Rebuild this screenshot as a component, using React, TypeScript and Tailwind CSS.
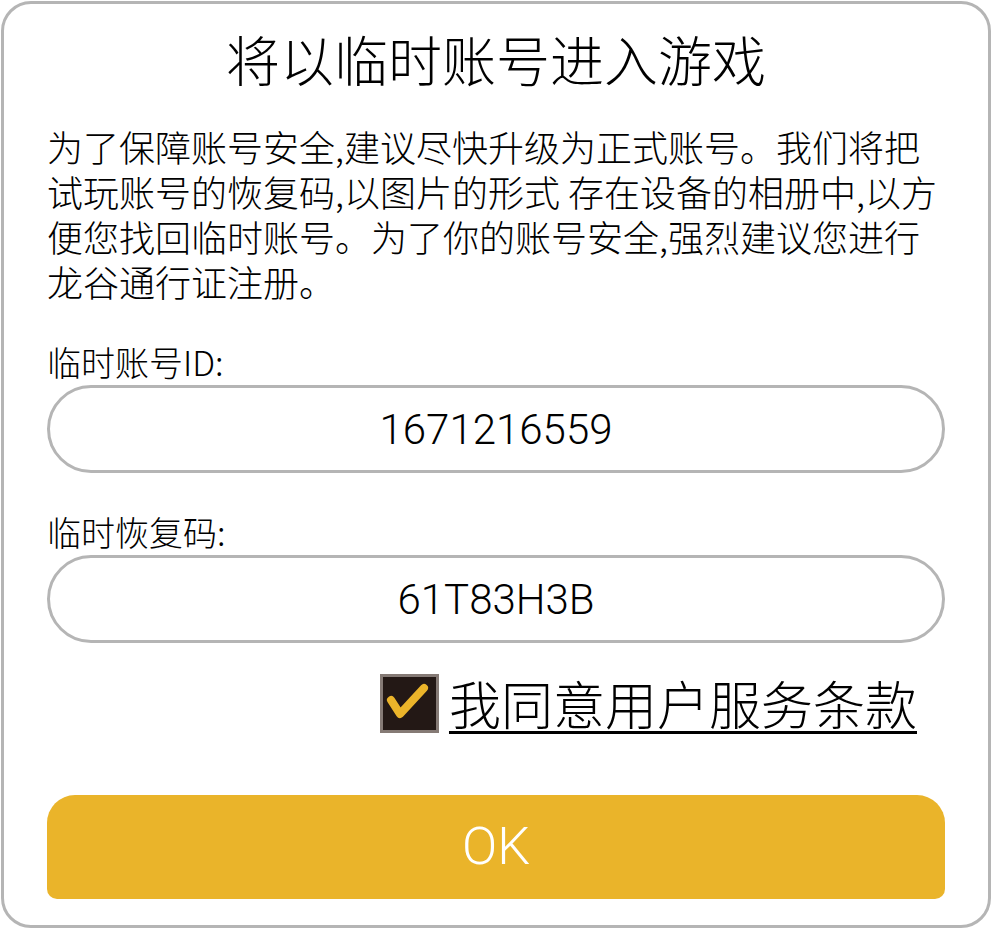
import React, { useState } from "react";

const font = { fontFamily: '"Noto Sans CJK SC", "Noto Sans", sans-serif' };
const latin = { fontFamily: 'Roboto, "Noto Sans CJK SC", sans-serif' };

const notice = [
  "为了保障账号安全,建议尽快升级为正式账号。我们将把",
  "试玩账号的恢复码,以图片的形式 存在设备的相册中,以方",
  "便您找回临时账号。为了你的账号安全,强烈建议您进行",
  "龙谷通行证注册。",
];

export default function App() {
  const [agreed, setAgreed] = useState(true);

  return (
    <div className="w-[993px] h-[930px] bg-white p-px" style={font}>
      <div className="w-[990px] h-[927px] border-[3px] border-[#b5b5b5] rounded-[30px] overflow-hidden flex flex-col px-[43px] text-black">
        {/* Title */}
        <h1 className="text-[54px] leading-[60px] text-center mt-[25px] font-light whitespace-nowrap">
          将以临时账号进入游戏
        </h1>

        {/* Notice */}
        <div className="mt-[35px] flex flex-col">
          {notice.map((line) => (
            <div key={line} className="h-[45px] flex items-center text-[36px] leading-[45px] font-light whitespace-nowrap">
              {line}
            </div>
          ))}
        </div>

        {/* Account ID */}
        <div className="mt-[38px] text-[34px] leading-[40px] font-light">临时账号ID:</div>
        <div
          className="mt-[3px] h-[88px] border-[3px] border-[#b5b5b5] rounded-full flex items-center justify-center text-[42px] font-light"
          style={latin}
        >
          1671216559
        </div>

        {/* Recovery code */}
        <div className="mt-[39px] text-[34px] leading-[40px] font-light">临时恢复码:</div>
        <div
          className="mt-[3px] h-[88px] border-[3px] border-[#b5b5b5] rounded-full flex items-center justify-center text-[42px] font-light"
          style={latin}
        >
          61T83H3B
        </div>

        {/* Agreement */}
        <div className="mt-[30px] flex items-center justify-end pr-[28px] gap-[10px]">
          <button
            onClick={() => setAgreed(!agreed)}
            className="w-[59px] h-[59px] shrink-0 border-[3px] border-[#857a75] bg-[#231815] flex items-center justify-center"
          >
            {agreed && (
              <svg width="53" height="53" viewBox="0 0 53 53">
                <path
                  d="M8 23 L17 37 L41 11"
                  fill="none"
                  stroke="#ebb42a"
                  strokeWidth="8"
                  strokeLinecap="round"
                  strokeLinejoin="round"
                />
              </svg>
            )}
          </button>
          <span className="text-[52px] leading-[60px] underline underline-offset-[6px] decoration-[3px] font-light whitespace-nowrap">
            我同意用户服务条款
          </span>
        </div>

        {/* OK */}
        <button
          className="mt-[62px] h-[104px] shrink-0 bg-[#eab42a] rounded-t-[28px] rounded-b-[10px] text-white text-[52px] font-light flex items-center justify-center"
          style={latin}
        >
          OK
        </button>
      </div>
    </div>
  );
}
